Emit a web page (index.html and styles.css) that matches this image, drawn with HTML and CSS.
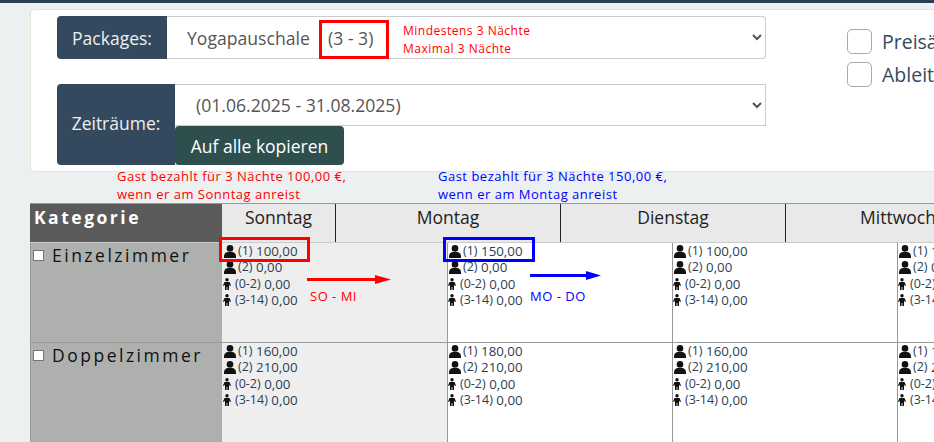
FILE: index.html
```html
<!DOCTYPE html>
<html lang="de">
<head>
<meta charset="utf-8">
<title>Packages</title>
<link rel="stylesheet" href="styles.css">
</head>
<body>
<svg class="defs" width="0" height="0" aria-hidden="true">
  <symbol id="adult" viewBox="0 0 12 13"><circle cx="6" cy="3.400" r="3.300"/><path d="M0 13v-1.600C0 8.600 2 7 4 7h4c2 0 4 1.600 4 4.400V13z"/></symbol>
  <symbol id="child" viewBox="0 0 8 12"><circle cx="4" cy="1.700" r="1.700"/><path d="M1.500 4h5L8 7.500l-1 .5-1-1.500V12H4.400V9h-.8v3H2V6.500L1 8l-1-.5z"/></symbol>
</svg>
<div class="topbar"></div>
<section class="card">
  <div class="forms">
    <div class="group group-one">
      <label class="addon addon-one" for="pkg">Packages:</label>
      <select id="pkg" class="select select-one"><option>Yogapauschale&nbsp;&nbsp;&nbsp; (3 - 3)</option></select>
    </div>
    <div class="group group-two">
      <label class="addon addon-two" for="per">Zeiträume:</label>
      <div class="stack">
        <select id="per" class="select select-two"><option>(01.06.2025 - 31.08.2025)</option></select>
        <button class="copy" type="button">Auf alle kopieren</button>
      </div>
    </div>
  </div>
  <div class="checks">
    <label class="check"><input type="checkbox"><span>Preisänderung</span></label>
    <label class="check"><input type="checkbox"><span>Ableiten</span></label>
  </div>
</section>

<section class="table">
  <div class="thead">
    <div class="th-cat">Kategorie</div>
    <div class="th-day th-first">Sonntag</div>
    <div class="th-day">Montag</div>
    <div class="th-day">Dienstag</div>
    <div class="th-day">Mittwoch</div>
  </div>
  <div class="row">
    <div class="room"><span class="box"></span>Einzelzimmer</div>
    <div class="cell cell-sun">
      <p><svg class="ad"><use href="#adult"/></svg><span class="lb">(1)</span> 100,00</p>
      <p><svg class="ad"><use href="#adult"/></svg><span class="lb">(2)</span> 0,00</p>
      <p><svg class="ch"><use href="#child"/></svg><span class="lb">(0-2)</span> 0,00</p>
      <p><svg class="ch"><use href="#child"/></svg><span class="lb">(3-14)</span> 0,00</p>
    </div>
    <div class="cell">
      <p><svg class="ad"><use href="#adult"/></svg><span class="lb">(1)</span> 150,00</p>
      <p><svg class="ad"><use href="#adult"/></svg><span class="lb">(2)</span> 0,00</p>
      <p><svg class="ch"><use href="#child"/></svg><span class="lb">(0-2)</span> 0,00</p>
      <p><svg class="ch"><use href="#child"/></svg><span class="lb">(3-14)</span> 0,00</p>
    </div>
    <div class="cell">
      <p><svg class="ad"><use href="#adult"/></svg><span class="lb">(1)</span> 100,00</p>
      <p><svg class="ad"><use href="#adult"/></svg><span class="lb">(2)</span> 0,00</p>
      <p><svg class="ch"><use href="#child"/></svg><span class="lb">(0-2)</span> 0,00</p>
      <p><svg class="ch"><use href="#child"/></svg><span class="lb">(3-14)</span> 0,00</p>
    </div>
    <div class="cell">
      <p><svg class="ad"><use href="#adult"/></svg><span class="lb">(1)</span> 100,00</p>
      <p><svg class="ad"><use href="#adult"/></svg><span class="lb">(2)</span> 0,00</p>
      <p><svg class="ch"><use href="#child"/></svg><span class="lb">(0-2)</span> 0,00</p>
      <p><svg class="ch"><use href="#child"/></svg><span class="lb">(3-14)</span> 0,00</p>
    </div>
  </div>
  <div class="row">
    <div class="room"><span class="box"></span>Doppelzimmer</div>
    <div class="cell cell-sun">
      <p><svg class="ad"><use href="#adult"/></svg><span class="lb">(1)</span> 160,00</p>
      <p><svg class="ad"><use href="#adult"/></svg><span class="lb">(2)</span> 210,00</p>
      <p><svg class="ch"><use href="#child"/></svg><span class="lb">(0-2)</span> 0,00</p>
      <p><svg class="ch"><use href="#child"/></svg><span class="lb">(3-14)</span> 0,00</p>
    </div>
    <div class="cell">
      <p><svg class="ad"><use href="#adult"/></svg><span class="lb">(1)</span> 180,00</p>
      <p><svg class="ad"><use href="#adult"/></svg><span class="lb">(2)</span> 210,00</p>
      <p><svg class="ch"><use href="#child"/></svg><span class="lb">(0-2)</span> 0,00</p>
      <p><svg class="ch"><use href="#child"/></svg><span class="lb">(3-14)</span> 0,00</p>
    </div>
    <div class="cell">
      <p><svg class="ad"><use href="#adult"/></svg><span class="lb">(1)</span> 160,00</p>
      <p><svg class="ad"><use href="#adult"/></svg><span class="lb">(2)</span> 210,00</p>
      <p><svg class="ch"><use href="#child"/></svg><span class="lb">(0-2)</span> 0,00</p>
      <p><svg class="ch"><use href="#child"/></svg><span class="lb">(3-14)</span> 0,00</p>
    </div>
    <div class="cell">
      <p><svg class="ad"><use href="#adult"/></svg><span class="lb">(1)</span> 160,00</p>
      <p><svg class="ad"><use href="#adult"/></svg><span class="lb">(2)</span> 210,00</p>
      <p><svg class="ch"><use href="#child"/></svg><span class="lb">(0-2)</span> 0,00</p>
      <p><svg class="ch"><use href="#child"/></svg><span class="lb">(3-14)</span> 0,00</p>
    </div>
  </div>
</section>

<div class="mark mark-range"></div>
<div class="note note-min">Mindestens 3 Nächte<br>Maximal 3 Nächte</div>
<div class="note note-sun">Gast bezahlt für 3 Nächte 100,00 €,<br>wenn er am Sonntag anreist</div>
<div class="note note-mon">Gast bezahlt für 3 Nächte 150,00 €,<br>wenn er am Montag anreist</div>
<div class="mark mark-sun"></div>
<div class="mark mark-mon"></div>
<svg class="arrow arrow-sun" viewBox="0 0 84 9"><path d="M0 3h68V0l16 4.500L68 9V6H0z"/></svg>
<svg class="arrow arrow-mon" viewBox="0 0 71 9"><path d="M0 3h56V0l15 4.500L56 9V6H0z"/></svg>
<div class="note tag-sun">SO - MI</div>
<div class="note tag-mon">MO - DO</div>
</body>
</html>
```
FILE: styles.css
```css
* { box-sizing: border-box; }
html, body { margin: 0; height: 442px; overflow: hidden; }
body {
  position: relative;
  background: #ecf0f1;
  font-family: "Open Sans", sans-serif;
  color: #2c3e50;
}
.defs { position: absolute; }
.topbar { height: 3px; background: #2c3e50; }

.card {
  display: flex;
  width: 1000px;
  height: 163px;
  margin: 6px 0 0 30px;
  padding: 6px 0 0 26px;
  background: #fff;
  border: 1px solid #dfe8d4;
  border-radius: 4px;
}
.forms { width: 709px; flex: none; }
.group { display: flex; }
.group-one { height: 43px; }
.group-two { height: 81px; margin-top: 25px; }
.addon {
  display: flex;
  align-items: center;
  justify-content: center;
  flex: none;
  background: #34495e;
  color: #ecf0f1;
  font-size: 17.500px;
  border-radius: 4px 0 0 4px;
}
.addon-one { width: 110px; }
.addon-two { width: 118px; padding-bottom: 4px; }
.select {
  display: block;
  height: 43px;
  padding: 0 10px 0 16px;
  font-family: "Open Sans", sans-serif;
  font-size: 17.600px;
  color: #555;
  background: #fff;
  border: 1px solid #ccc;
  border-left: 0;
  outline: 0;
}
.select-one { width: 599px; border-radius: 0 4px 4px 0; }
.stack { display: flex; flex-direction: column; align-items: flex-start; }
.select-two { width: 591px; height: 42px; padding-left: 17px; }
.copy {
  height: 39px;
  width: 169px;
  padding: 0;
  background: #2f4f4f;
  color: #fff;
  border: 0;
  border-radius: 4px;
  font-family: "Open Sans", sans-serif;
  font-size: 17.500px;
}
.checks {
  display: flex;
  flex-direction: column;
  gap: 8px;
  margin: 13px 0 0 81px;
}
.check { display: flex; align-items: center; gap: 10px; font-size: 19.500px; color: #34495e; height: 25px; }
.check input {
  appearance: none;
  width: 25px;
  height: 25px;
  margin: 0;
  background: #fff;
  border: 1px solid #aaa;
  border-radius: 5px;
}

.table {
  width: 1100px;
  margin: 31px 0 0 30px;
  border-top: 1px solid #999;
}
.thead { display: flex; height: 39px; border-bottom: 1px solid #ccc; background: #e9e9e9; }
.th-cat {
  width: 192px;
  flex: none;
  padding: 1px 0 0 4px;
  background: #5a5a5a;
  color: #fff;
  font-weight: 700;
  font-size: 17.500px;
  letter-spacing: 2.500px;
}
.th-day {
  width: 225px;
  flex: none;
  padding-top: 1px;
  border-left: 1px solid #222;
  text-align: center;
  font-size: 17.500px;
  color: #222;
}
.th-first { width: 113px; border-left: 0; }
.row {
  display: grid;
  grid-template-columns: 192px repeat(4, 225px);
  height: 100px;
  border-bottom: 1px solid #999;
}
.room {
  display: flex;
  align-items: baseline;
  padding: 0 0 0 2px;
  background: #aeb0ad;
  border-left: 1px solid #999;
  font-size: 17.500px;
  letter-spacing: 2.500px;
  color: #111;
}
.box {
  flex: none;
  align-self: flex-start;
  width: 11px;
  height: 11px;
  margin: 7px 8px 0 0;
  background: #fff;
  border: 1px solid #777;
}
.cell {
  padding: 0 0 0 1px;
  background: #fff;
  border-left: 1px solid #999;
  font-size: 13.300px;
  line-height: 16.400px;
  color: #2c3e50;
}
.cell-sun { background: #eee; border-left: 0; padding-left: 2px; }
.cell p { display: flex; align-items: center; gap: 3.500px; margin: 0; white-space: nowrap; }
.lb { font-size: 12.500px; color: #2c3e50; }
.ad { width: 12px; height: 13px; margin-right: -1.500px; fill: #111; flex: none; }
.ch { width: 8px; height: 12px; margin-left: -1px; margin-right: .5px; fill: #111; flex: none; }

.note { position: absolute; font-size: 13px; line-height: 18px; letter-spacing: .5px; white-space: nowrap; }
.note-min { left: 403px; top: 22px; color: #f00; font-size: 12px; }
.note-sun { left: 117px; top: 167px; color: #f00; }
.note-mon { left: 438px; top: 167px; color: #00f; }
.tag-sun { left: 310px; top: 287px; color: #f00; }
.tag-mon { left: 530px; top: 287px; color: #00f; }
.mark { position: absolute; border-style: solid; }
.mark-range { left: 319px; top: 20px; width: 70px; height: 39px; border-width: 3px; border-color: #f00; }
.mark-sun { left: 219px; top: 237px; width: 91px; height: 25px; border-width: 3px; border-color: #f00; }
.mark-mon { left: 443px; top: 237px; width: 92px; height: 25px; border-width: 3px; border-color: #00f; }
.arrow { position: absolute; }
.arrow-sun { left: 307px; top: 275px; width: 84px; height: 9px; fill: #f00; }
.arrow-mon { left: 530px; top: 271px; width: 71px; height: 9px; fill: #00f; }
```
